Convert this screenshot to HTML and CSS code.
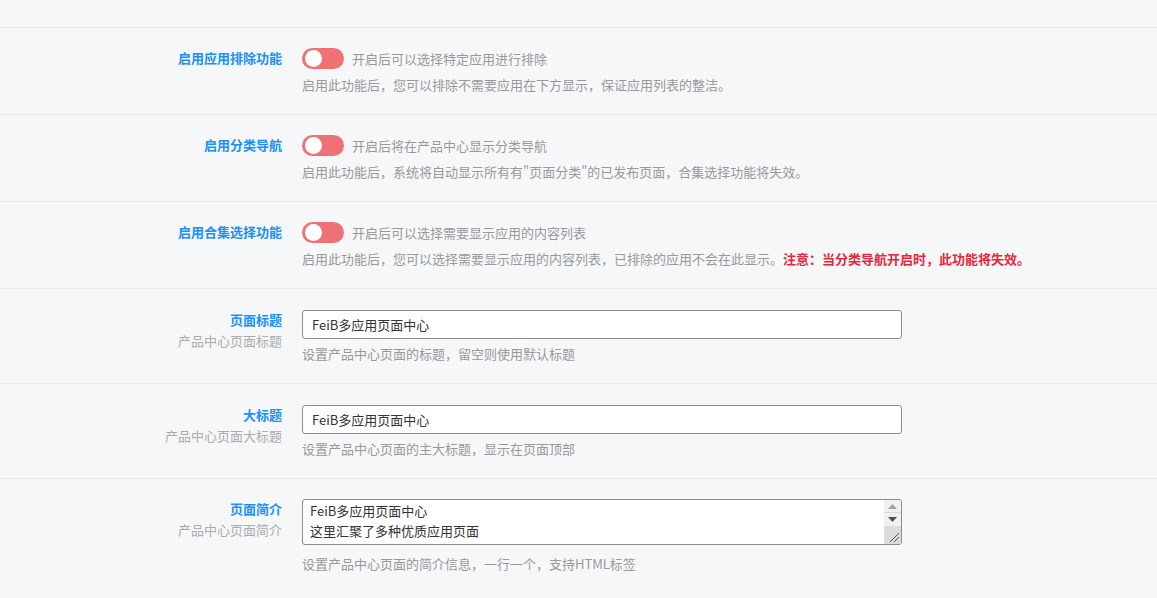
FILE: index.html
```html
<!DOCTYPE html>
<html lang="zh-CN">
<head>
<meta charset="utf-8">
<title>设置</title>
<link rel="stylesheet" href="styles.css">
</head>
<body>
<div class="page">
  <div class="top-space"></div>

  <div class="row">
    <div class="label"><div class="label-title">启用应用排除功能</div></div>
    <div class="field">
      <div class="switch-line">
        <span class="switch"><span class="knob"></span></span>
        <span class="switch-text">开启后可以选择特定应用进行排除</span>
      </div>
      <div class="desc desc-switch">启用此功能后，您可以排除不需要应用在下方显示，保证应用列表的整洁。</div>
    </div>
  </div>

  <div class="row">
    <div class="label"><div class="label-title">启用分类导航</div></div>
    <div class="field">
      <div class="switch-line">
        <span class="switch"><span class="knob"></span></span>
        <span class="switch-text">开启后将在产品中心显示分类导航</span>
      </div>
      <div class="desc desc-switch">启用此功能后，系统将自动显示所有有"页面分类"的已发布页面，合集选择功能将失效。</div>
    </div>
  </div>

  <div class="row">
    <div class="label"><div class="label-title">启用合集选择功能</div></div>
    <div class="field">
      <div class="switch-line">
        <span class="switch"><span class="knob"></span></span>
        <span class="switch-text">开启后可以选择需要显示应用的内容列表</span>
      </div>
      <div class="desc desc-switch">启用此功能后，您可以选择需要显示应用的内容列表，已排除的应用不会在此显示。<strong class="warn">注意：当分类导航开启时，此功能将失效。</strong></div>
    </div>
  </div>

  <div class="row row-input">
    <div class="label">
      <div class="label-title">页面标题</div>
      <div class="label-sub">产品中心页面标题</div>
    </div>
    <div class="field">
      <input class="text-input" type="text" value="FeiB多应用页面中心">
      <div class="desc desc-input">设置产品中心页面的标题，留空则使用默认标题</div>
    </div>
  </div>

  <div class="row row-input">
    <div class="label">
      <div class="label-title">大标题</div>
      <div class="label-sub">产品中心页面大标题</div>
    </div>
    <div class="field">
      <input class="text-input" type="text" value="FeiB多应用页面中心">
      <div class="desc desc-input">设置产品中心页面的主大标题，显示在页面顶部</div>
    </div>
  </div>

  <div class="row">
    <div class="label">
      <div class="label-title">页面简介</div>
      <div class="label-sub">产品中心页面简介</div>
    </div>
    <div class="field">
      <div class="textarea-box">
        <textarea class="textarea" rows="2">FeiB多应用页面中心
这里汇聚了多种优质应用页面</textarea>
        <div class="scrollbar">
          <div class="sb-btn sb-up"><svg width="9" height="5" viewBox="0 0 9 5"><path d="M0 5 L4.5 0 L9 5 Z" fill="#a3a3a3"/></svg></div>
          <div class="sb-btn sb-down"><svg width="9" height="5" viewBox="0 0 9 5"><path d="M0 0 L9 0 L4.5 5 Z" fill="#505050"/></svg></div>
          <div class="sb-corner"><svg width="11" height="11" viewBox="0 0 11 11"><path d="M1 10 L10 1 M5 10 L10 5" stroke="#555" stroke-width="1"/></svg></div>
        </div>
      </div>
      <div class="desc desc-area">设置产品中心页面的简介信息，一行一个，支持HTML标签</div>
    </div>
  </div>
</div>
</body>
</html>
```

FILE: styles.css
```css
* { box-sizing: border-box; }

html, body {
  margin: 0;
  padding: 0;
  background: #f6f7f9;
}

body {
  font-family: "Noto Sans CJK SC", "Noto Sans", sans-serif;
  font-size: 13px;
  color: #333;
}

.page {
  width: 1157px;
}

.top-space {
  height: 27px;
}

.row {
  display: grid;
  grid-template-columns: 282px 1fr;
  column-gap: 20px;
  border-top: 1px solid #e6e8eb;
  padding: 20px 0 19px;
}

.row-input {
  padding-top: 21px;
}

.label {
  text-align: right;
}

.label-title {
  font-weight: bold;
  color: #1890ff;
  line-height: 20px;
  font-size: 13px;
}

.label-sub {
  color: #ababab;
  line-height: 21px;
  font-size: 13px;
}

.field {
  display: flex;
  flex-direction: column;
  align-items: flex-start;
}

.switch-line {
  display: flex;
  align-items: center;
  gap: 8px;
  height: 21px;
}

.switch {
  position: relative;
  display: inline-block;
  width: 42px;
  height: 21px;
  border-radius: 11px;
  background: #ef7173;
}

.knob {
  position: absolute;
  top: 2px;
  left: 3px;
  width: 17px;
  height: 17px;
  border-radius: 50%;
  background: #fff;
}

.switch-text {
  color: #999;
  font-size: 13px;
  line-height: 20px;
}

.desc {
  color: #999;
  font-size: 13px;
  line-height: 20px;
}

.desc-switch { margin-top: 6px; }
.desc-input { margin-top: 5px; }
.desc-area { margin-top: 9px; }

.warn {
  color: #e5283c;
  font-weight: bold;
}

.text-input {
  width: 600px;
  height: 29px;
  border: 1px solid #8c8c8c;
  border-radius: 3px;
  background: #fff;
  padding: 0 9px;
  font-family: "Noto Sans CJK SC", "Noto Sans", sans-serif;
  font-size: 13px;
  color: #333;
  outline: none;
}

.textarea-box {
  display: flex;
  width: 600px;
  height: 46px;
  border: 1px solid #8c8c8c;
  border-radius: 3px;
  background: #fff;
  overflow: hidden;
}

.textarea {
  flex: 1;
  border: 0;
  resize: none;
  overflow: hidden;
  padding: 1px 7px;
  font-family: "Noto Sans CJK SC", "Noto Sans", sans-serif;
  font-size: 13px;
  line-height: 20px;
  color: #333;
  background: transparent;
  outline: none;
}

.scrollbar {
  width: 17px;
  display: flex;
  flex-direction: column;
  background: #f1f1f1;
}

.sb-btn {
  height: 13px;
  display: flex;
  align-items: center;
  justify-content: center;
}

.sb-up {
  border-bottom: 1px solid #dcdcdc;
}

.sb-corner {
  flex: 1;
  background: #dcdcdc;
  display: flex;
  align-items: flex-end;
  justify-content: flex-end;
  padding: 0 1px 1px 0;
}
```
